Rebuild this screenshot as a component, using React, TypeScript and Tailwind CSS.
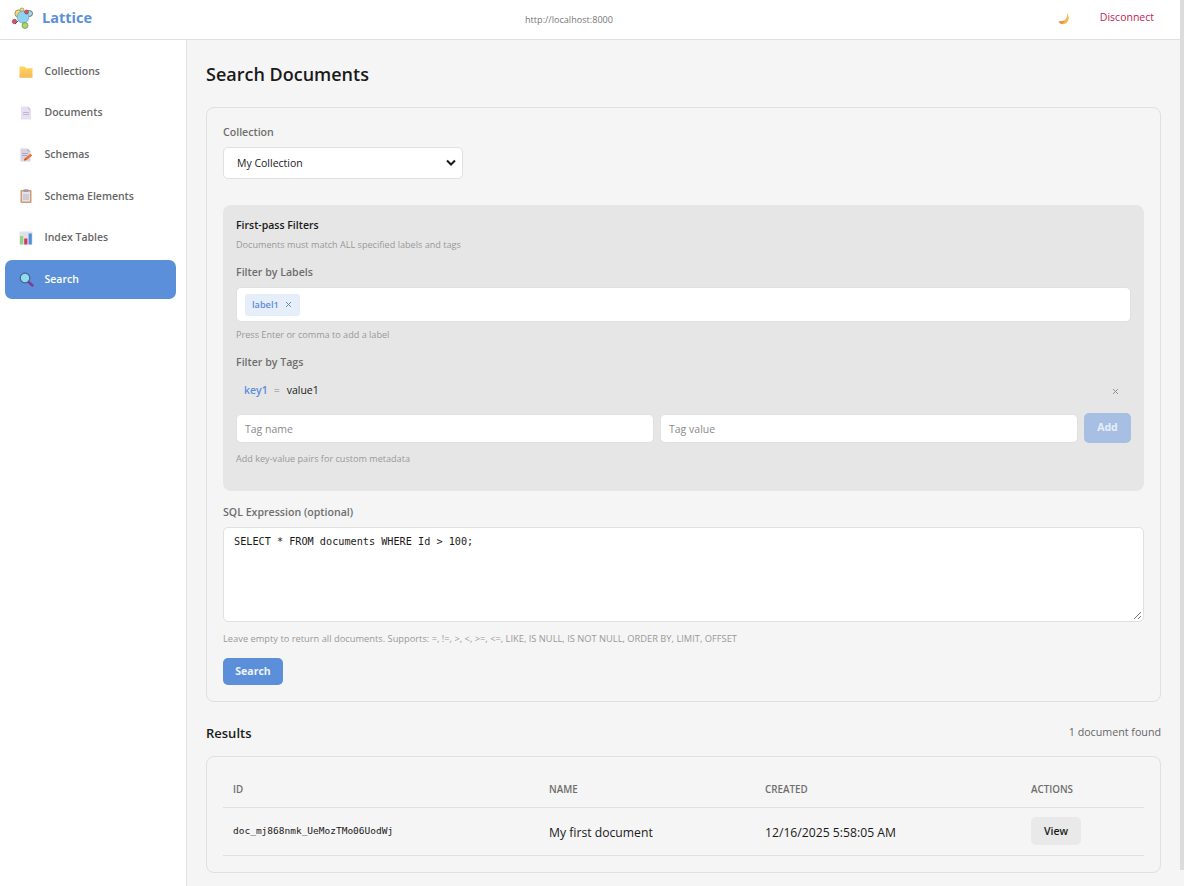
import React from "react";

const Logo = () => (
  <svg width="24" height="24" viewBox="0 0 24 24" className="shrink-0">
    <path d="M5 18 L12 11 L19 7 M9 6 L13 12 L15 19" stroke="#555" strokeWidth="1" fill="none" />
    <circle cx="8.5" cy="7.5" r="3.6" fill="#f6dc6a" stroke="#8a7a40" strokeWidth="0.7" />
    <circle cx="19.5" cy="7.5" r="3" fill="#a9d8ea" stroke="#555" strokeWidth="0.8" />
    <circle cx="12" cy="4" r="2" fill="#f6dc6a" stroke="#6a6a40" strokeWidth="0.5" />
    <circle cx="13" cy="11" r="6" fill="#8fd3f4" stroke="#6a94a8" strokeWidth="0.6" />
    <circle cx="16.5" cy="6" r="2" fill="#d9526a" stroke="#6a2a3a" strokeWidth="0.5" />
    <circle cx="4.5" cy="15.5" r="2.2" fill="#d9526a" stroke="#6a2a3a" strokeWidth="0.5" />
    <circle cx="15" cy="19.5" r="3" fill="#a8d86a" stroke="#5f7a3a" strokeWidth="0.6" />
  </svg>
);

const Folder = () => (
  <svg width="14" height="14" viewBox="0 0 14 14">
    <defs>
      <linearGradient id="fg" x1="0" y1="0" x2="0" y2="1">
        <stop offset="0" stopColor="#fdd663" />
        <stop offset="1" stopColor="#f7b955" />
      </linearGradient>
    </defs>
    <path d="M0.5 1.5 H5.5 L7 3.2 H13.5 V12.8 H0.5 Z" fill="url(#fg)" />
  </svg>
);
const Doc = () => (
  <svg width="14" height="14" viewBox="0 0 14 14">
    <path d="M2 0.5 H9 L12 3.5 V13.5 H2 Z" fill="#e6e0f2" />
    <path d="M9 0.5 L12 3.5 H9 Z" fill="#c9c2da" />
    <path d="M4 6.5 H10 M4 8.5 H10" stroke="#bdb7cc" strokeWidth="1" />
  </svg>
);
const Memo = () => (
  <svg width="14" height="14" viewBox="0 0 14 14">
    <path d="M1.5 0.5 H8.5 L11.5 3.5 V13.5 H1.5 Z" fill="#d9d2e2" />
    <path d="M8.5 0.5 L11.5 3.5 H8.5 Z" fill="#b9b2c2" />
    <path d="M3 5.5 H9 M3 7.5 H8" stroke="#a9a3b3" strokeWidth="0.9" />
    <path d="M5 12.5 L6 10 L11.5 5.8 L13.2 7.6 L8 11.8 Z" fill="#f0702e" />
    <path d="M5 12.5 L6 10 L7.6 11.9 Z" fill="#b9503a" />
  </svg>
);
const Clip = () => (
  <svg width="14" height="14" viewBox="0 0 14 14">
    <rect x="1.5" y="1" width="11" height="13" rx="1" fill="#d09a72" />
    <rect x="3" y="2.5" width="8" height="10" fill="#e6e2ea" />
    <rect x="4.5" y="0.3" width="5" height="2.7" fill="#a09ca8" />
    <path d="M4 6 H10 M4 8 H10 M4 10 H10" stroke="#b4b0bc" strokeWidth="0.9" />
  </svg>
);
const Chart = () => (
  <svg width="14" height="14" viewBox="0 0 14 14">
    <rect x="0.5" y="0.5" width="13" height="13" fill="#e4e0e8" />
    <rect x="1" y="5" width="3.2" height="8.5" fill="#8ed87a" />
    <rect x="5.2" y="7.5" width="3.2" height="6" fill="#d8336f" />
    <rect x="9.6" y="2.5" width="3.2" height="11" fill="#4f90d8" />
  </svg>
);
const Lens = () => (
  <svg width="15" height="15" viewBox="0 0 15 15">
    <path d="M9 9.5 L13.5 13.5" stroke="#7a3f8a" strokeWidth="2.4" strokeLinecap="round" />
    <circle cx="6" cy="6" r="4.8" fill="#8fdcef" stroke="#4f5f8f" strokeWidth="1.2" />
  </svg>
);
const Moon = () => (
  <svg width="12" height="12" viewBox="0 0 12 12">
    <path d="M9 0.3 C11.8 3.5 11.2 8.6 7.6 10.6 C5 12 1.8 11 0.4 8.8 C3 8.2 5.4 8.2 7.2 6.6 C8.8 5 9.4 2.8 9 0.3 Z" fill="#f5b851" />
    <path d="M0.4 8.8 C2.6 7.8 4.8 8 6.2 8.2 C6 10 4 11.6 2.6 10.6 C1.6 10.2 0.9 9.6 0.4 8.8 Z" fill="#e8925a" />
  </svg>
);

const nav: [string, React.ReactNode][] = [
  ["Collections", <Folder />],
  ["Documents", <Doc />],
  ["Schemas", <Memo />],
  ["Schema Elements", <Clip />],
  ["Index Tables", <Chart />],
  ["Search", <Lens />],
];

const inputCls =
  "h-[29px] flex-1 min-w-0 bg-white border border-[#e0e0e0] rounded-[5px] px-2 pt-[3px] text-[10.5px] text-[#8a8a8a] flex items-center";
const labelCls = "text-[10.6px] leading-[14px] font-semibold text-[#6e6e6e]";
const hintCls = "text-[9.1px] leading-[14px] text-[#999]";

export default function App() {
  return (
    <div className="h-[886px] w-[1184px] overflow-hidden flex bg-[#f5f5f5] font-['Open_Sans',sans-serif] text-[#1a1a1a]">
      <div className="flex flex-col w-[1180px] shrink-0">
        <header className="h-[40px] bg-white border-b border-[#e0e0e0] flex items-center shrink-0">
          <div className="flex items-center pl-[10px] pb-[3px] gap-[8px] w-[507px]">
            <Logo />
            <span className="text-[14.5px] font-bold text-[#5b8fd9]">Lattice</span>
          </div>
          <span className="text-[9.1px] text-[#777] w-[124px] text-center">http://localhost:8000</span>
          <div className="flex-1 flex items-center justify-end pb-[1px]">
            <Moon />
            <span className="text-[10.5px] text-[#c2224f] ml-[30px] mr-[26px] mb-[3px]">Disconnect</span>
          </div>
        </header>
        <div className="flex flex-1 min-h-0">
          <aside className="w-[187px] shrink-0 bg-white border-r border-[#e0e0e0] pt-[11.8px] pl-[5px] pr-[10px]">
            {nav.map(([name, icon]) => (
              <div
                key={name}
                className={
                  name === "Search"
                    ? "h-[39.6px] mb-[2px] flex items-center rounded-[7px] bg-[#5b8fd9] text-white"
                    : "h-[39.6px] mb-[2px] flex items-center rounded-[7px] text-[#666]"
                }
              >
                <span className="w-[39.5px] pl-[14px] flex justify-start shrink-0">{icon}</span>
                <span className="text-[10.5px] font-semibold">{name}</span>
              </div>
            ))}
          </aside>
          <main className="flex-1 min-w-0 pl-[19px] pr-[19px] pt-[22px]">
            <h1 className="text-[18px] leading-[24px] font-semibold text-[#1a1a1a] mb-[21px]">Search Documents</h1>
            <section className="h-[595px] border border-[#e0e0e0] rounded-[8px] px-[16px] pt-[17px]">
              <label className={"block " + labelCls}>Collection</label>
              <div className="mt-[8px] w-[240px] h-[32px] bg-white border border-[#e0e0e0] rounded-[5px] flex items-center justify-between pl-[13px] pr-[6px]">
                <span className="text-[10.5px] text-[#1a1a1a] pt-[2px]">My Collection</span>
                <svg width="10" height="8" viewBox="0 0 10 8">
                  <path d="M1 1.5 L5 5.5 L9 1.5" stroke="#1a1a1a" strokeWidth="2" fill="none" />
                </svg>
              </div>
              <div className="mt-[26px] h-[286px] bg-[#e6e6e6] rounded-[8px] px-[13px] pt-[13px]">
                <div className="text-[10.5px] leading-[14px] font-semibold text-[#1a1a1a]">First-pass Filters</div>
                <div className={"mt-[6px] " + hintCls}>Documents must match ALL specified labels and tags</div>
                <div className={"mt-[13px] " + labelCls}>Filter by Labels</div>
                <div className="mt-[8px] h-[35px] bg-white border border-[#e0e0e0] rounded-[5px] flex items-center pl-[8px]">
                  <span className="h-[22px] w-[55px] bg-[#e6eef9] rounded-[3px] flex items-center pl-[7px] gap-[6px] text-[9.2px] font-semibold text-[#5b8fd9]">
                    label1
                    <svg width="7" height="7" viewBox="0 0 7 7"><path d="M1 1 L6 6 M6 1 L1 6" stroke="#5b7fb0" strokeWidth="0.9" /></svg>
                  </span>
                </div>
                <div className={"mt-[6px] " + hintCls}>Press Enter or comma to add a label</div>
                <div className={"mt-[13px] " + labelCls}>Filter by Tags</div>
                <div className="mt-[7px] h-[28px] flex items-center pl-[8px] pr-[12px] pt-[2px] text-[10.5px]">
                  <span className="font-semibold text-[#5b8fd9]">key1</span>
                  <span className="ml-[6px] text-[#888]">=</span>
                  <span className="ml-[7px] text-[#1a1a1a]">value1</span>
                  <svg className="ml-auto" width="7" height="7" viewBox="0 0 7 7"><path d="M1 1 L6 6 M6 1 L1 6" stroke="#888" strokeWidth="0.9" /></svg>
                </div>
                <div className="mt-[9px] flex items-center gap-[6px]">
                  <div className={inputCls}>Tag name</div>
                  <div className={inputCls}>Tag value</div>
                  <div className="h-[30px] w-[47px] shrink-0 bg-[#a6bfe3] rounded-[5px] flex items-center justify-center text-[10.5px] font-bold text-[#e8eef8]">Add</div>
                </div>
                <div className={"mt-[9px] " + hintCls}>Add key-value pairs for custom metadata</div>
              </div>
              <label className={"mt-[14px] block " + labelCls}>SQL Expression (optional)</label>
              <div className="relative mt-[8px] h-[95px] bg-white border border-[#e0e0e0] rounded-[5px] px-[10px] pt-[7px] font-['DejaVu_Sans_Mono',monospace] text-[10.2px] leading-[14px] text-[#1a1a1a]">
                SELECT * FROM documents WHERE Id &gt; 100;
                <svg className="absolute right-[1px] bottom-[1px]" width="9" height="9" viewBox="0 0 9 9"><path d="M1 8 L8 1 M5 8 L8 5" stroke="#666" strokeWidth="0.9" /></svg>
              </div>
              <div className="mt-[10px] text-[9.3px] leading-[14px] text-[#999]">Leave empty to return all documents. Supports: =, !=, &gt;, &lt;, &gt;=, &lt;=, LIKE, IS NULL, IS NOT NULL, ORDER BY, LIMIT, OFFSET</div>
              <div className="mt-[12px] h-[27px] w-[60px] bg-[#5b8fd9] rounded-[5px] flex items-center justify-center text-[10.5px] font-bold text-[#eef3fb]">Search</div>
            </section>
            <div className="mt-[22px] flex items-center justify-between h-[20px]">
              <h2 className="text-[13px] font-semibold text-[#1a1a1a]">Results</h2>
              <span className="text-[10.7px] text-[#666] mb-[3px]">1 document found</span>
            </div>
            <section className="mt-[12px] h-[117px] border border-[#e0e0e0] rounded-[8px] px-[16px] pt-[16px]">
              <div className="h-[35px] pt-[1px] grid grid-cols-[316px_216px_266px_1fr] items-center border-b border-[#e0e0e0] text-[9.8px] font-semibold text-[#6e6e6e] uppercase">
                <span className="pl-[10px]">ID</span>
                <span className="pl-[10px]">Name</span>
                <span className="pl-[10px]">Created</span>
                <span className="pl-[10px]">Actions</span>
              </div>
              <div className="h-[48px] grid grid-cols-[316px_216px_266px_1fr] items-center border-b border-[#e0e0e0] text-[12.2px]">
                <span className="pl-[10px] font-['DejaVu_Sans_Mono',monospace] text-[9.5px] mb-[1px]">doc_mj868nmk_UeMozTMo06UodWj</span>
                <span className="pl-[10px] pt-[3px]">My first document</span>
                <span className="pl-[10px] pt-[3px]">12/16/2025 5:58:05 AM</span>
                <span className="pl-[10px] mb-[2px]">
                  <span className="h-[28px] w-[50px] bg-[#e9e9e9] rounded-[5px] flex items-center justify-center text-[10.5px] font-semibold pt-[3px]">View</span>
                </span>
              </div>
            </section>
          </main>
        </div>
      </div>
      <div className="w-[4px] h-[870px] bg-[#dcdcdc]" />
    </div>
  );
}
